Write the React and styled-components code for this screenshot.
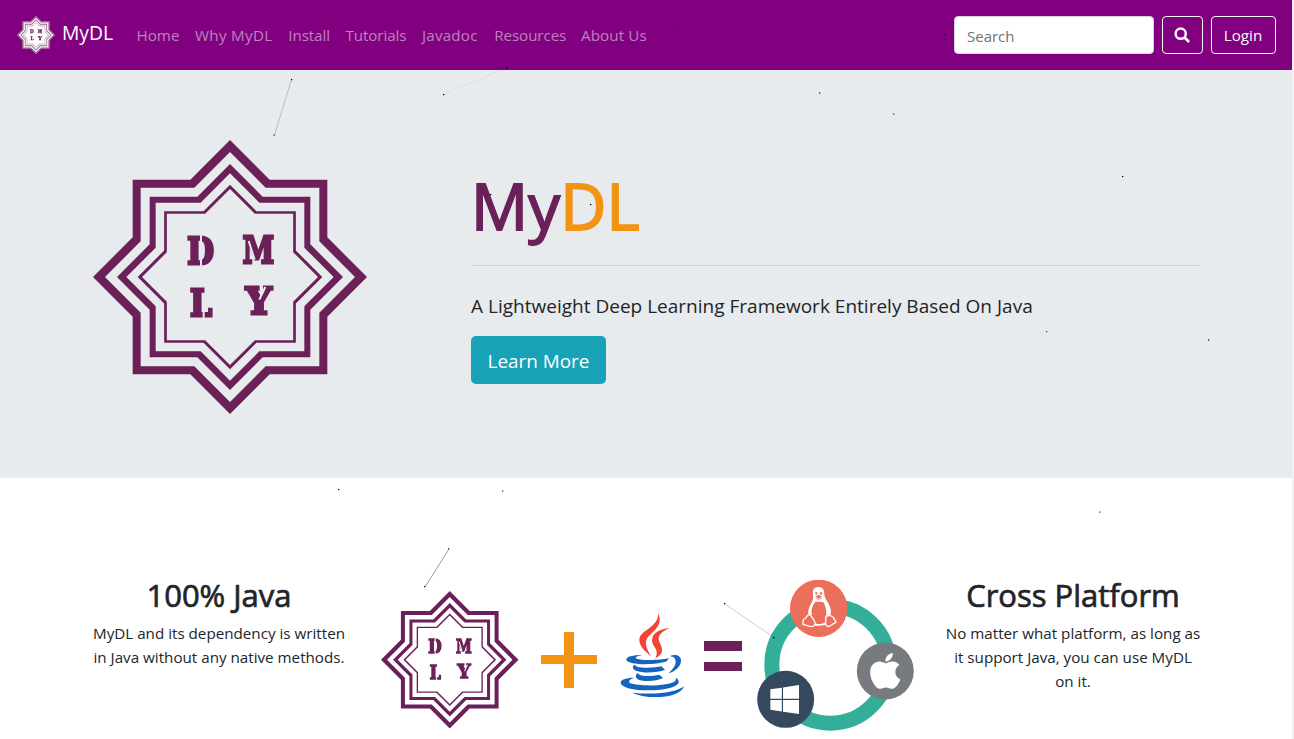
import React, { useId } from "react";
import styled, { createGlobalStyle } from "styled-components";
import { FaApple } from "react-icons/fa";

const PLUM = "#6b2158";
const ORANGE = "#f39314";

const GlobalStyle = createGlobalStyle`
  *, *::before, *::after { box-sizing: border-box; }
  html { background: #f1f1f1; }
  body {
    margin: 0;
    overflow: hidden;
    font-family: "Open Sans", "Noto Sans", sans-serif;
    font-size: 15.2px;
    line-height: 24px;
    color: #212529;
  }
  svg { display: block; flex: none; }
`;

const Page = styled.div`
  position: relative;
  width: 1292px;
  height: 739px;
  overflow: hidden;
  background: #fff;
`;

const Navbar = styled.nav`
  display: flex;
  align-items: center;
  height: 70px;
  padding: 0 16px;
  background: #800080;
`;

const Brand = styled.a`
  display: flex;
  align-items: center;
  gap: 7px;
  width: 112.5px;
  padding-left: 1px;
  color: #fff;
  font-size: 19.3px;
  line-height: 30px;
`;

const BrandName = styled.span`
  margin-top: -5px;
`;

const NavLinks = styled.div`
  display: flex;
  flex: 1;
`;

const NavLink = styled.a`
  width: ${(p) => p.$w}px;
  padding-left: 8px;
  white-space: nowrap;
  color: rgba(255, 255, 255, 0.5);
  letter-spacing: ${(p) => p.$track || 0}px;
`;

const SearchForm = styled.form`
  display: flex;
  gap: 8px;
`;

const SearchInput = styled.input`
  width: 200px;
  height: 38px;
  padding: 2px 12px 0;
  border: 1px solid #ced4da;
  border-radius: 4px;
  font: inherit;
  font-size: 15px;
  outline: none;
  background: #fff;
  &::placeholder { color: #6c757d; opacity: 1; }
`;

const OutlineButton = styled.button`
  display: flex;
  align-items: center;
  justify-content: center;
  width: ${(p) => p.$w}px;
  height: 38px;
  padding: 0 1px 0 0;
  border: 1px solid #f8f9fa;
  border-radius: 4px;
  background: transparent;
  color: #f8f9fa;
  font: inherit;
`;

const Hero = styled.header`
  height: 408px;
  background: #e7ebee;
`;

const Container = styled.div`
  display: flex;
  width: 1110px;
  margin: 0 auto;
`;

const HeroArt = styled.div`
  width: 380px;
  padding: 70.4px 0 0 2.4px;
`;

const HeroCopy = styled.div`
  flex: 1;
  padding-top: 96px;
`;

const HeroTitle = styled.h1`
  height: 99px;
  margin: 0;
  font-size: 63.5px;
  font-weight: 400;
  line-height: 79px;
  color: ${PLUM};
  letter-spacing: 0.2px;
  -webkit-text-stroke: 1.8px currentColor;
`;

const TitleAccent = styled.span`
  color: ${ORANGE};
`;

const Rule = styled.hr`
  height: 1px;
  margin: 0;
  border: 0;
  background: #cfd2d5;
`;

const Tagline = styled.p`
  margin: 25px 0 15px;
  font-size: 19px;
  font-weight: 400;
  line-height: 30px;
  letter-spacing: 0.01px;
  white-space: nowrap;
`;

const PrimaryButton = styled.button`
  display: block;
  width: 135px;
  height: 48px;
  padding: 2px 0 0;
  border: 0;
  border-radius: 5px;
  background: #17a2b8;
  color: #fff;
  font: inherit;
  font-size: 18.9px;
`;

const Features = styled(Container)`
  padding-top: 97px;
  justify-content: space-between;
`;

const Feature = styled.section`
  width: 256px;
  text-align: center;
`;

const FeatureTitle = styled.h2`
  margin: 0 0 6px;
  font-size: 31px;
  font-weight: 400;
  line-height: 40px;
  white-space: nowrap;
  -webkit-text-stroke: 0.7px currentColor;
`;

const FeatureText = styled.p`
  margin: 0;
  white-space: nowrap;
`;

const Equation = styled.div`
  display: flex;
  align-items: center;
  width: 542px;
  height: 151px;
  margin-top: 5.4px;
`;

const Term = styled.div`
  margin-left: ${(p) => p.$gap}px;
  padding-top: ${(p) => p.$drop || 0}px;
`;

const Particles = styled.svg`
  position: absolute;
  top: 0;
  left: 0;
  pointer-events: none;
`;

const star = (r, a) => {
  const j = r - a;
  const pts = [
    [0, -r], [j, -a], [a, -a], [a, -j], [r, 0], [a, j], [a, a], [j, a],
    [0, r], [-j, a], [-a, a], [-a, j], [-r, 0], [-a, -j], [-a, -a], [-j, -a],
  ];
  return "M" + pts.map((p) => p.join(" ")).join("L") + "Z";
};

const RINGS = [
  [411, 292, 375, 268],
  [339, 241, 311, 223],
  [277, 197.5, 264, 189.5],
];

const LETTERS = [
  ["D", -128, -40, 80],
  ["M", 38, -43, 94],
  ["L", -120, 116, 66],
  ["Y", 47, 112, 78],
];

function Logo({ size, backing }) {
  const maskId = useId();
  return (
    <svg width={size} height={size} viewBox="-411 -411 822 822">
      <mask id={maskId} maskUnits="userSpaceOnUse" x="-200" y="-200" width="400" height="400">
        <rect x="-200" y="-200" width="400" height="400" fill="#fff" />
        <path
          d="M-87-140V-25M-79 70V130M56-108 74-52M106 30 88 68"
          stroke="#000"
          strokeWidth="6"
        />
      </mask>
      {backing && <path d={star(411, 292)} fill={backing} />}
      {RINGS.map(([r, a, r2, a2]) => (
        <path
          key={r}
          d={star(r, a) + star(r2, a2)}
          fill={PLUM}
          fillRule="evenodd"
          opacity={backing ? 0.7 : 1}
        />
      ))}
      <g mask={`url(#${maskId})`}>
        {LETTERS.map(([ch, x, y, w]) => (
          <text
            key={ch}
            x={x}
            y={y}
            textLength={w}
            lengthAdjust="spacingAndGlyphs"
            fontFamily="DejaVu Serif, Liberation Serif, serif"
            fontWeight="700"
            fontSize="110"
            fill={PLUM}
            stroke={PLUM}
            strokeWidth="9"
          >
            {ch}
          </text>
        ))}
      </g>
    </svg>
  );
}

function SearchIcon() {
  return (
    <svg width="16" height="16" viewBox="0 0 16 16" fill="none" stroke="#f8f9fa" strokeLinecap="round">
      <circle cx="6.700" cy="6.700" r="5.100" strokeWidth="2.500" />
      <path d="M10.800 10.800 14.300 14.300" strokeWidth="2.700" />
    </svg>
  );
}

function JavaCup() {
  return (
    <svg width="66" height="85" viewBox="60 69 198 255">
      <g fill="#f44336">
        <path d="M175 70C183 88 180 104 165 120C150 135 138 143 138 158C138 175 146 186 153 198C134 184 118 168 118 150C118 120 175 115 175 70Z" />
        <path d="M211 114C190 120 176 134 176 146C176 158 186 165 186 180C186 192 178 198 166 205C170 195 172 190 168 178C162 168 156 162 156 150C156 128 185 115 211 114Z" />
      </g>
      <g fill="#1565c0">
        <path d="M126 195C90 195 78 202 79 210C84 225 165 227 200 214L207 205C175 212 125 211 110 206C102 202 112 198 126 195Z" />
        <path d="M210 198C225 192 243 196 243 212C243 230 225 244 206 250C218 238 228 226 227 214C226 204 222 201 210 198Z" />
        <path d="M103 224C95 231 99 238 108 242C130 250 170 249 195 239L184 229C165 234 125 234 112 230C108 228 106 226 103 224Z" />
        <path d="M113 249C104 257 106 264 116 269C135 276 170 274 189 264L178 254C160 259 130 259 120 255Z" />
        <path d="M102 263C75 263 62 270 62 278C64 293 100 301 145 301C195 301 236 291 236 275C236 268 231 265 227 264C230 272 222 278 205 281C170 289 110 287 92 280C82 275 90 268 102 263Z" />
        <path d="M97 308C130 327 240 330 252 288C235 306 165 316 97 308Z" />
      </g>
    </svg>
  );
}

function PlatformRing() {
  return (
    <svg width="157" height="151.300" viewBox="51 30 471 454">
      <circle cx="271" cy="284" r="175.500" fill="none" stroke="#33ae99" strokeWidth="45" />
      <circle cx="236" cy="115" r="86" fill="#ec6f5b" />
      <circle cx="436" cy="303" r="85.500" fill="#777b80" />
      <circle cx="137" cy="388" r="85.500" fill="#34495e" />
      <g fill="#fff">
        <path d="M219 75C216 58 224 51 236 51C249 51 253 60 253 74C254 88 272 103 273 124C273 131 271 137 268 141L257 146C262 128 258 108 249 96L226 95C216 108 212 122 216 136L205 133C203 117 211 104 216 95C220 88 220 82 219 75Z" />
        <path d="M222 160C234 164 247 163 258 156L258 164C247 167 233 168 223 167Z" />
        <path d="M91 358 125.500 353V386.500H91ZM129 352.500 177 345V386.500H129ZM91 390H125.500V424.500L91 419ZM129 390H177V432L129 425Z" />
      </g>
      <g fill="#ec6f5b" stroke="#fff" strokeWidth="4" strokeLinejoin="round">
        <path d="M190 148C195 149 200 139 204 135C211 132 217 142 222 151C229 160 225 169 215 170C207 170 199 165 190 164C186 160 191 154 190 148Z" />
        <path d="M258 139C264 135 275 136 280 142C282 148 286 152 288 156C284 161 276 162 270 168C263 172 257 168 257 160C256 153 257 146 258 139Z" />
      </g>
      <g fill="#ec6f5b">
        <ellipse cx="229" cy="70" rx="3" ry="4" />
        <ellipse cx="243" cy="70" rx="3.500" ry="4" />
        <path d="M226 78 236 75 246 79 236 87Z" />
      </g>
      <path d="M227 83C231 89 239 90 246 83" fill="none" stroke="#ec6f5b" strokeWidth="2" />
      <FaApple x="374" y="241" size={123.4} color="#fff" />
    </svg>
  );
}

const DOTS = [
  [679, 25, 0.5], [944, 34, 0.6], [506, 67, 1], [443, 94, 1], [291, 79, 1], [273.5, 134.5, 0.8],
  [819, 92.5, 0.9], [893, 113.5, 0.8], [1122, 176, 1], [490, 194, 1], [590, 204, 1],
  [1046, 331, 0.7], [1208, 339.5, 1], [338, 489, 1], [502, 490.5, 0.8], [1099, 511.5, 0.8],
  [448, 548, 0.8], [424, 586, 0.9], [724, 603, 1], [773, 637, 1],
];

const LINKS = [
  [291.5, 79.5, 274.5, 135, 0.2],
  [443.5, 94.5, 515, 64, 0.05],
  [449, 549, 425, 587, 0.4],
  [725, 604, 774, 637.5, 0.2],
];

const NAV_ITEMS = [
  ["Home", 58.5, 0], ["Why MyDL", 93.3, 0.3], ["Install", 57.2, -0.1], ["Tutorials", 76.5, -0.1],
  ["Javadoc", 72.3, 0.2], ["Resources", 86.7, -0.1], ["About Us", 90, 0.1],
];

export default function App() {
  return (
    <Page>
      <GlobalStyle />
      <Navbar>
        <Brand>
          <Logo size={38} backing="#fff" />
          <BrandName>MyDL</BrandName>
        </Brand>
        <NavLinks>
          {NAV_ITEMS.map(([label, w, track]) => (
            <NavLink key={label} $w={w} $track={track}>{label}</NavLink>
          ))}
        </NavLinks>
        <SearchForm>
          <SearchInput placeholder="Search" />
          <OutlineButton type="button" $w={41} aria-label="Search"><SearchIcon /></OutlineButton>
          <OutlineButton type="button" $w={65}>Login</OutlineButton>
        </SearchForm>
      </Navbar>

      <Hero>
        <Container>
          <HeroArt><Logo size={274} /></HeroArt>
          <HeroCopy>
            <HeroTitle>My<TitleAccent>DL</TitleAccent></HeroTitle>
            <Rule />
            <Tagline>A Lightweight Deep Learning Framework Entirely Based On Java</Tagline>
            <PrimaryButton>Learn More</PrimaryButton>
          </HeroCopy>
        </Container>
      </Hero>

      <Features>
        <Feature>
          <FeatureTitle>100% Java</FeatureTitle>
          <FeatureText>
            MyDL and its dependency is written<br />in Java without any native methods.
          </FeatureText>
        </Feature>
        <Equation>
          <Term $gap={6} $drop={7}><Logo size={137.5} /></Term>
          <Term $gap={22.5} $drop={9}>
            <svg width="56" height="56" viewBox="0 0 56 56">
              <path d="M23 0h10v23h23v9H33v24H23V32H0v-9h23Z" fill={ORANGE} />
            </svg>
          </Term>
          <Term $gap={23}><JavaCup /></Term>
          <Term $gap={18}>
            <svg width="38" height="30" viewBox="0 0 38 30">
              <path d="M0 0h38v10H0ZM0 21h38v9H0Z" fill={PLUM} />
            </svg>
          </Term>
          <Term $gap={15}><PlatformRing /></Term>
        </Equation>
        <Feature>
          <FeatureTitle>Cross Platform</FeatureTitle>
          <FeatureText>
            No matter what platform, as long as<br />it support Java, you can use MyDL<br />on it.
          </FeatureText>
        </Feature>
      </Features>

      <Particles width="1292" height="739" viewBox="0 0 1292 739">
        {LINKS.map(([x1, y1, x2, y2, o]) => (
          <line key={x1} x1={x1} y1={y1} x2={x2} y2={y2} stroke="#000" strokeOpacity={o} strokeWidth="1" />
        ))}
        {DOTS.map(([x, y, o]) => (
          <rect key={x} x={x} y={y} width="1.300" height="1.200" fill="#000" opacity={o} />
        ))}
      </Particles>
    </Page>
  );
}
